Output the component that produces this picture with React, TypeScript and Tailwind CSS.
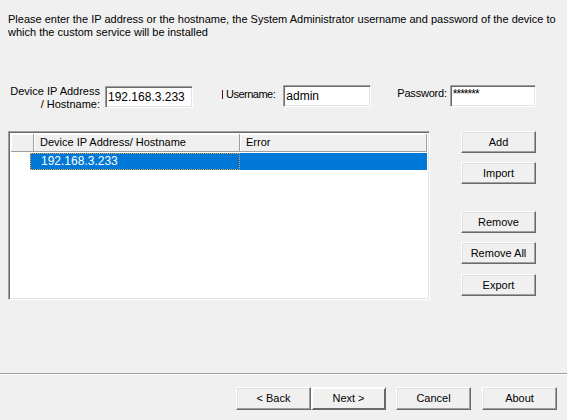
import React from "react";

const btn =
  "flex items-center justify-center w-[75px] bg-[#f0f0f0] text-black text-[11px] border border-t-white border-l-white border-r-[#696969] border-b-[#696969] shadow-[inset_-1px_-1px_#a0a0a0,inset_1px_1px_#e3e3e3]";

const field =
  "h-[22px] bg-white border border-t-[#a0a0a0] border-l-[#a0a0a0] border-r-white border-b-white shadow-[inset_1px_1px_#696969,inset_-1px_-1px_#e3e3e3] px-[2px] text-[12px] leading-[18px] text-black outline-none";

const headCell =
  "h-full flex items-center bg-[#f0f0f0] border-r border-b border-r-[#a0a0a0] border-b-[#a0a0a0] shadow-[inset_1px_1px_white] text-[11px]";

function SideButton({ label, className = "" }: { label: string; className?: string }) {
  return <button className={`${btn} h-[22px] ${className}`}>{label}</button>;
}

export default function App() {
  return (
    <div
      className="w-[567px] h-[420px] bg-[#f0f0f0] text-black flex flex-col overflow-hidden select-none"
      style={{ fontFamily: '"Liberation Sans", Arial, sans-serif' }}
    >
      {/* intro */}
      <p className="pt-[13px] px-[8px] text-[11px] leading-[13px]">
        Please enter the IP address or the hostname, the System Administrator username and password of the device to
        <br />
        which the custom service will be installed
      </p>

      {/* credentials row */}
      <div className="flex items-start mt-[45px] text-[11px]">
        <div className="w-[100px] text-right leading-[13px] mt-[1px]">
          Device IP Address
          <br />/ Hostname:
        </div>
        <input readOnly className={`${field} w-[88px] ml-[5px] mt-[2px]`} value="192.168.3.233" />

        <div className="flex items-center ml-[29px] mt-[4px] h-[13px]">
          <span className="w-[1px] h-[9px] bg-[#5a1010]" />
          <span className="ml-[3px] leading-[13px] tracking-[-0.5px]">Username:</span>
        </div>
        <input readOnly className={`${field} w-[88px] ml-[8px] mt-[1px]`} value="admin" />

        <span className="ml-[26px] mt-[3px] leading-[13px] tracking-[-0.2px]">Password:</span>
        <input
          readOnly
          className={`${field} w-[86px] ml-[3px] mt-[1px] text-[11px] leading-[12px] pt-[1px] pb-[6px] tracking-[-1px]`}
          value="*******"
        />
      </div>

      {/* list + side buttons */}
      <div className="flex items-start mt-[20px]">
        <div className="ml-[8px] w-[422px] h-[169px] bg-white border border-t-[#a0a0a0] border-l-[#a0a0a0] border-r-white border-b-white shadow-[inset_1px_1px_#696969,inset_-1px_-1px_#e3e3e3] p-[2px] flex flex-col">
          <div className="flex h-[18px]">
            <div className={`${headCell} w-[23px]`} />
            <div className={`${headCell} w-[206px] pl-[6px]`}>Device IP Address/ Hostname</div>
            <div className={`${headCell} flex-1 pl-[6px] border-r-[#696969]`}>Error</div>
          </div>
          <div className="flex h-[17px] mt-[1px] text-[12px] text-white">
            <div className="w-[19px]" />
            <div className="w-[210px] bg-[#0078d7] border border-dotted border-[#f0a040] pl-[10px] leading-[15px]">
              192.168.3.233
            </div>
            <div className="flex-1 bg-[#0078d7]" />
          </div>
        </div>

        <div className="ml-[31px] flex flex-col">
          <SideButton label="Add" />
          <SideButton label="Import" className="mt-[9px]" />
          <SideButton label="Remove" className="mt-[27px]" />
          <SideButton label="Remove All" className="mt-[9px]" />
          <SideButton label="Export" className="mt-[10px]" />
        </div>
      </div>

      {/* separator */}
      <div className="mt-[73px] border-t border-t-[#a0a0a0] border-b border-b-white" />

      {/* footer */}
      <div className="flex mt-[12px]">
        <button className={`${btn} h-[23px] ml-[236px]`}>&lt; Back</button>
        <button className={`${btn} h-[23px] border-[#404040] shadow-[inset_1px_1px_white,inset_-1px_-1px_#696969]`}>
          Next &gt;
        </button>
        <button className={`${btn} h-[23px] ml-[10px]`}>Cancel</button>
        <button className={`${btn} h-[23px] ml-[11px]`}>About</button>
      </div>
    </div>
  );
}
